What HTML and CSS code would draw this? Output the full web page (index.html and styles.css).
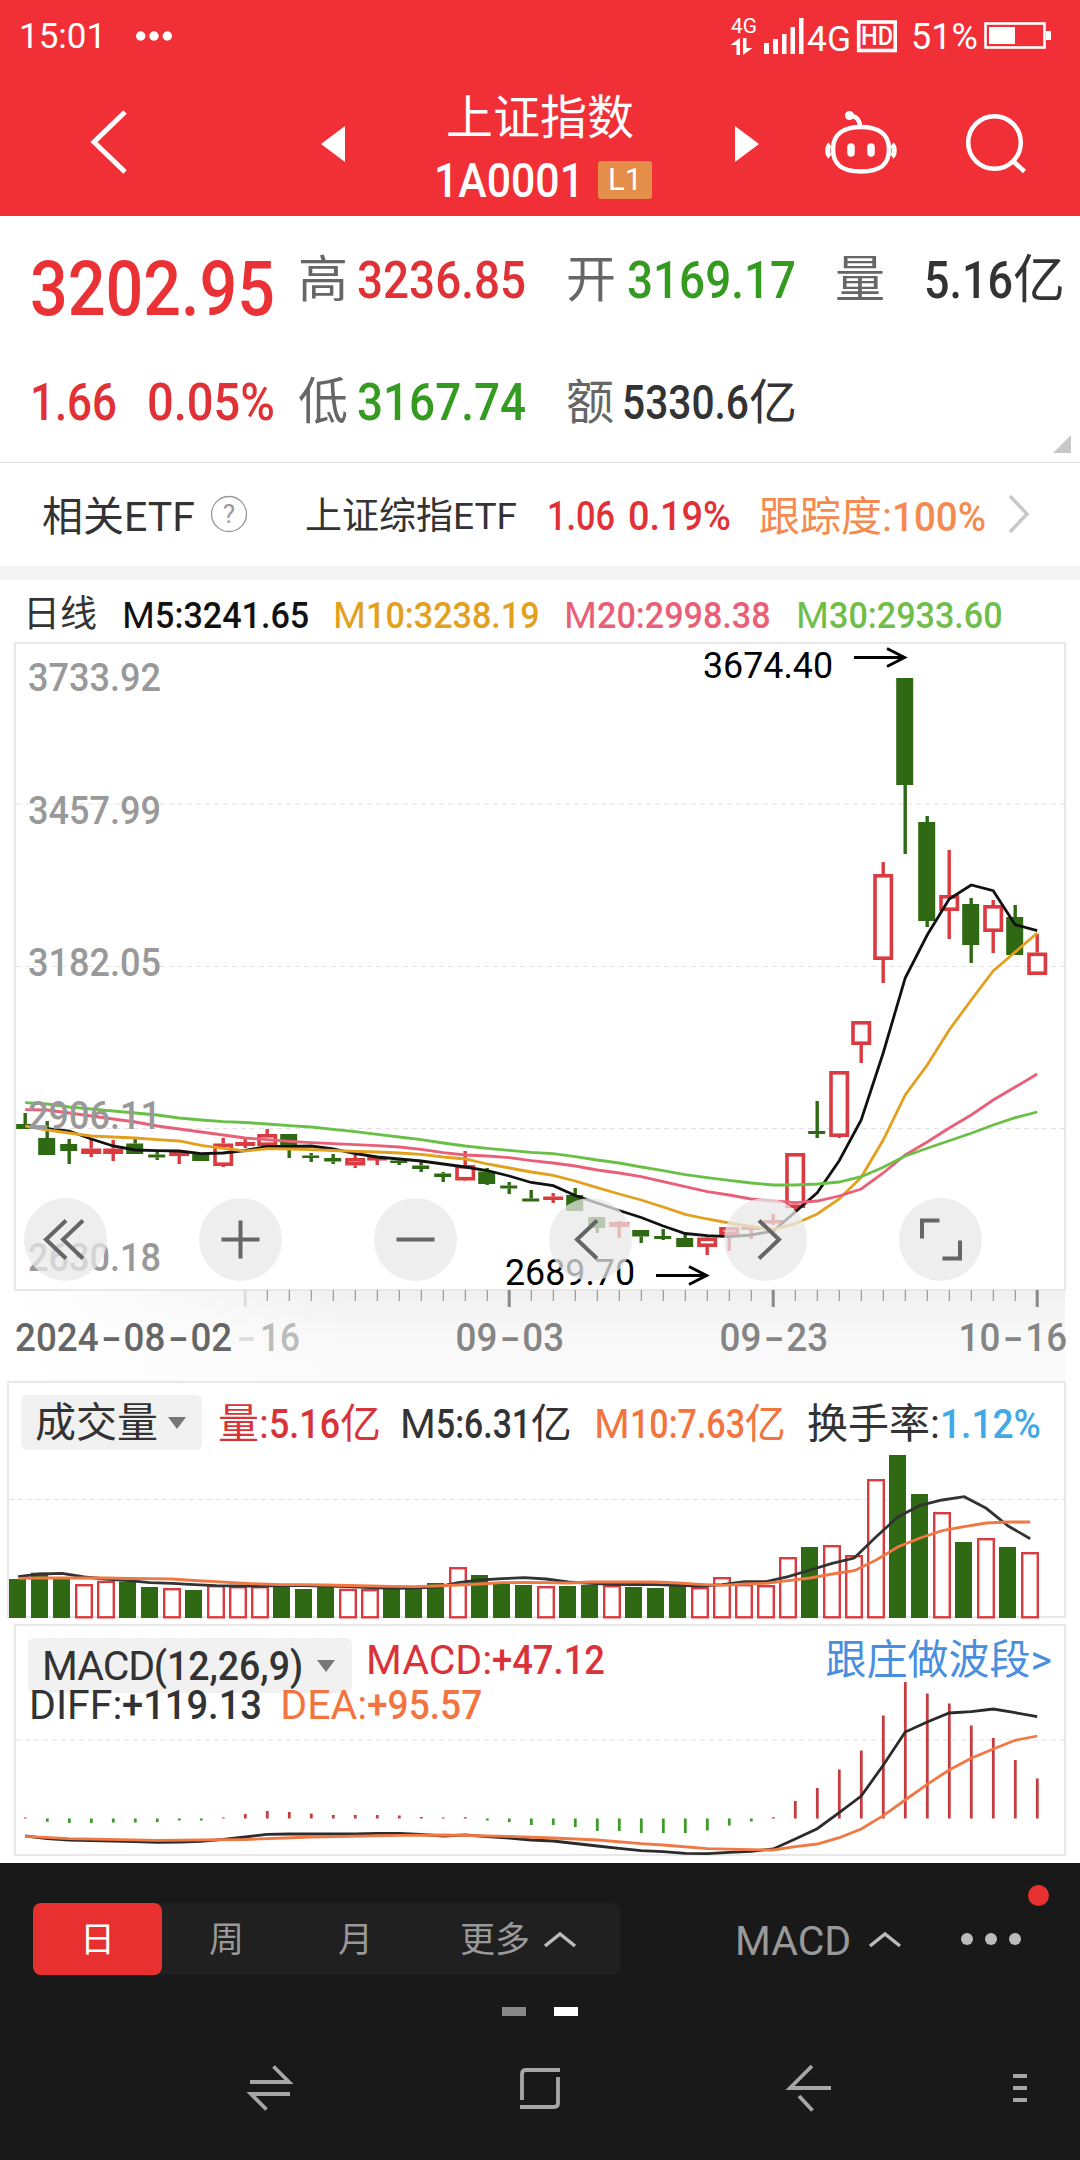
FILE: index.html
```
<!DOCTYPE html>
<html lang="zh-CN">
<head>
  <meta charset="UTF-8" />
  <meta name="viewport" content="width=device-width, initial-scale=1.0"/>
  <title>上证指数 1A0001</title>
  <link rel="stylesheet" href="styles.css">
</head>
<body>

  <header class="header">
    <div class="status">
      <span class="time">15:01</span>
      <svg class="dots" width="36" height="10" viewBox="0 0 36 10" fill="#fff"><circle cx="4.7" cy="5" r="4.7"/><circle cx="18" cy="5" r="4.7"/><circle cx="31.3" cy="5" r="4.7"/></svg>
      <svg class="signal" width="170" height="44" viewBox="730 14 170 44" fill="#fff">
        <text x="733" y="33" font-size="21" textLength="26" lengthAdjust="spacingAndGlyphs">4G</text>
        <path d="M742 38v17h-3.500V45h-6zM745 55V38h3.500v10h6z"/>
        <path d="M766 43h5v11h-5zM775 39h5v15h-5zM784 34h4.500v20h-4.500zM792.500 27h4.500v27h-4.500zM801 18h4.500v36h-4.500z"/>
        <text x="809" y="50.500" font-size="35" textLength="44" lengthAdjust="spacingAndGlyphs">4G</text>
        <rect x="860.700" y="22" width="36.500" height="28.500" fill="none" stroke="#fff" stroke-width="3.600"/>
        <text x="863" y="45" font-size="25" textLength="32" lengthAdjust="spacingAndGlyphs" class="medium">HD</text>
      </svg>
      <span class="percent">51%</span>
      <svg width="68" height="28" viewBox="0 0 68 28"><rect x="1.500" y="1.500" width="59" height="24" fill="none" stroke="#fff" stroke-width="2.600"/><path d="M5 5h26v17H5zM62 9h5v9h-5z" fill="#fff"/></svg>
    </div>
    <div class="nav">
      <svg class="nav-icons" width="1080" height="156" viewBox="0 60 1080 156" fill="none" stroke="#fff" stroke-width="5">
        <path d="M125 112L94 142l31 30"/>
        <path d="M321 144l24-18v36zM759 144l-24-18v36z" fill="#fff" stroke="none"/>
        <g stroke-width="4.500">
          <path d="M861 127c-17 0-28 7-28 22s8 22.500 28 22.500 28-7.500 28-22.500-11-22-28-22z"/>
          <path d="M860 127c0-7-4-11-9-11"/>
          <circle cx="849.500" cy="115.500" r="2.300"/>
          <path d="M830 144.500c-3 2-3 10 0 12M892 144.500c3 2 3 10 0 12" stroke-width="5"/>
          <path d="M851 147v6M871 147v6" stroke-width="7.500" stroke-linecap="round"/>
          <circle cx="994.500" cy="142.500" r="26.300"/>
          <path d="M1013.500 161.500l11 10"/>
        </g>
      </svg>
      <div class="title">
        <div class="name">上证指数</div>
        <div class="code"><b class="din" data-w="150">1A0001</b><span class="badge">L1</span></div>
      </div>
    </div>
  </header>

  <section class="quote">
    <div class="quote-row first">
      <span class="price up"><b class="din" data-w="245">3202.95</b></span>
      <span class="label">高</span><span class="up"><b class="din" data-w="169">3236.85</b></span>
      <span class="label">开</span><span class="down"><b class="din" data-w="169">3169.17</b></span>
      <span class="label">量</span><span class="volume"><b class="din" data-w="89">5.16</b>亿</span>
    </div>
    <div class="quote-row second">
      <span class="change up"><b class="din" data-w="87">1.66</b><b class="din">0.05%</b></span>
      <span class="label">低</span><span class="down"><b class="din" data-w="169">3167.74</b></span>
      <span class="label">额</span><span class="amount"><b class="din" data-w="127">5330.6</b>亿</span>
      <svg class="corner" width="18" height="18" viewBox="0 0 18 18"><path d="M18 0v18H0z" fill="#c8c8c8"/></svg>
    </div>
  </section>

  <section class="etf">
    <span class="etf-title">相关ETF</span>
    <svg class="help" width="38" height="38" viewBox="0 0 38 38"><circle cx="19" cy="19" r="17.500" fill="none" stroke="#999" stroke-width="1.300"/><text x="19" y="28" font-size="26" text-anchor="middle" fill="#999">?</text></svg>
    <span class="etf-name">上证综指ETF</span>
    <span class="up"><b class="din" data-w="68">1.06</b></span>
    <span class="up"><b class="din" data-w="103">0.19%</b></span>
    <span class="track">跟踪度:<b class="din" data-w="94">100%</b></span>
    <svg width="24" height="40" viewBox="0 0 24 40" fill="none" stroke="#c8c8c8" stroke-width="3.500"><path d="M2 2l17 18L2 38"/></svg>
  </section>

  <section class="ma">
    <span class="day">日线</span>
    <span class="m5">M<b class="din">5:3241.65</b></span>
    <span class="m10">M<b class="din">10:3238.19</b></span>
    <span class="m20">M<b class="din">20:2998.38</b></span>
    <span class="m30">M<b class="din">30:2933.60</b></span>
  </section>

  <section class="panel kline">
    <svg id="kline" width="1080" height="738" viewBox="0 642 1080 738"></svg>
    <div class="tools">
      <svg viewBox="-41.500 -41.500 83 83"><path d="M.500-19L-19.500 0l20 19M17.500-19L-2.500 0l20 19"/></svg>
      <svg viewBox="-41.500 -41.500 83 83"><path d="M-19 0h38M0-19v38"/></svg>
      <svg viewBox="-41.500 -41.500 83 83"><path d="M-19 0h38"/></svg>
      <svg viewBox="-41.500 -41.500 83 83"><path d="M6.500-19L-13.500 0l20 19"/></svg>
      <svg viewBox="-41.500 -41.500 83 83"><path d="M-6.500-19L13.500 0l-20 19"/></svg>
      <svg viewBox="-41.500 -41.500 83 83"><path d="M-1-19h-17.500V-1M2 19h17.500V1"/></svg>
    </div>
  </section>

  <section class="panel volume-panel">
    <svg id="volume" width="1080" height="242" viewBox="0 1380 1080 242"></svg>
    <div class="legend">
      <span class="picker">成交量<i class="arrow"></i></span>
      <span class="red">量:<b class="din" data-w="71">5.16</b>亿</span>
      <span>M<b class="din" data-w="95">5:6.31</b>亿</span>
      <span class="orange">M<b class="din" data-w="115">10:7.63</b>亿</span>
      <span>换手率:<b class="din blue">1.12%</b></span>
    </div>
  </section>

  <section class="panel macd-panel">
    <svg id="macd" width="1080" height="241" viewBox="0 1622 1080 241"></svg>
    <div class="macd-legend">
      <div class="macd-top">
        <span class="picker"><span class="macd-name">MACD</span><b class="din" data-w="149">(12,26,9)</b><i class="arrow"></i></span>
        <span class="red">MACD:<b class="din" data-w="113">+47.12</b></span>
        <span class="link">跟庄做波段&gt;</span>
      </div>
      <div class="macd-bottom">
        <span>DIFF:<b class="din" data-w="140">+119.13</b></span>
        <span class="orange">DEA:<b class="din">+95.57</b></span>
      </div>
    </div>
  </section>

  <footer class="footer">
    <div class="bar">
      <div class="tabs">
        <span class="tab active">日</span>
        <span class="tab">周</span>
        <span class="tab">月</span>
        <span class="tab more">更多<svg width="34" height="16" viewBox="0 0 34 16"><path d="M2 14L17 2l15 12"/></svg></span>
      </div>
      <span class="indicator">MACD<svg width="34" height="16" viewBox="0 0 34 16"><path d="M2 14L17 2l15 12"/></svg></span>
      <svg class="menu" width="90" height="72" viewBox="960 1885 90 72"><g fill="#bbb"><circle cx="967" cy="1939" r="6"/><circle cx="991" cy="1939" r="6"/><circle cx="1015" cy="1939" r="6"/></g><circle cx="1038.500" cy="1895.500" r="10.500" fill="#e93030"/></svg>
    </div>
    <div class="pages"><i></i><i class="on"></i></div>
    <svg class="system" width="1080" height="60" viewBox="0 2058 1080 60" fill="none" stroke="#a6a6a6" stroke-width="3.800">
      <path d="M250 2082h39l-15.500-15.500M290 2094h-39l15.500 15.500"/>
      <path d="M522 2100v-26q0-4 4-4h34M558 2077v26q0 4-4 4h-34"/>
      <path d="M812 2066l-22 22h41M799 2096l13.500 14.500"/>
      <path d="M1013 2076h14M1013 2088h14M1013 2100h14"/>
    </svg>
  </footer>

  <script src="script.js"></script>
</body>
</html>
```
FILE: styles.css
```
* {
  box-sizing: border-box;
}
body {
  margin: 0;
  width: 1080px;
  background: #fff;
  color: #333;
  font-family: Roboto, "Noto Sans CJK SC", sans-serif;
  white-space: nowrap;
}
svg {
  display: block;
  flex: none;
}
svg text {
  font-family: Roboto, sans-serif;
}
i {
  font-style: normal;
}
.medium {
  font-weight: 500;
}
/* narrow digits, width is set in script.js */
.din {
  display: inline-block;
  font-weight: 500;
  transform-origin: 0 50%;
}
.up {
  color: #e03236;
}
.down {
  color: #349a20;
}
.red {
  color: #d9333a;
}
.orange {
  color: #f27440;
}
.blue {
  color: #42a9e6;
}

/* header */
.header {
  height: 216px;
  background: #f12f37;
  color: #fff;
}
.status {
  display: flex;
  height: 60px;
  padding: 14px 28px 0 19px;
  align-items: center;
}
.time, .percent {
  font-size: 36px;
  line-height: 46px;
}
.time {
  width: 87px;
  font-size: 35px;
}
.status svg {
  margin-top: -2px;
}
.status .dots {
  margin-left: 30px;
}
.signal {
  margin-left: auto;
}
.percent {
  margin: 0 6px 0 13px;
  width: 67px;
}
.nav {
  display: grid;
}
.nav-icons, .title {
  grid-area: 1 / 1;
}
.title {
  justify-self: center;
  padding-top: 27px;
}
.name {
  font-size: 47px;
  line-height: 62px;
  text-align: center;
}
.code {
  display: flex;
  padding-left: 6px;
  font-size: 48px;
  line-height: 63px;
}
.badge {
  width: 54px;
  height: 38px;
  margin: 12px 0 0 14px;
  background: #e48e49;
  border-radius: 3px;
  font-size: 31px;
  line-height: 38px;
  text-align: center;
}

/* quote */
.quote {
  height: 247px;
  border-bottom: 1px solid #ddd;
}
.quote-row {
  display: grid;
  grid-template-columns: 268px 59px 209px 61px 208px 89px 156px;
  padding-left: 30px;
  font-size: 52px;
  height: 128px;
  line-height: 129px;
}
.quote-row.second {
  height: 118px;
  line-height: 117px;
}
.label {
  font-size: 50px;
  color: #666;
}
.price {
  font-size: 76px;
  line-height: 147px;
}
.price.up {
  color: #ea3135;
}
.change .din + .din {
  margin-left: 30px;
}
.second .amount, .second .label:nth-child(4) {
  font-size: 48px;
}
.amount {
  margin-left: -5px;
}
.corner {
  grid-column: 7;
  margin: 91px 0 0 129px;
}

/* related etf */
.etf {
  display: grid;
  grid-template-columns: 168px 95px 242px 81px 131px 249px 40px;
  height: 117px;
  padding-left: 42px;
  border-bottom: 14px solid #f4f4f4;
  font-size: 40px;
  line-height: 108px;
}
.etf-title {
  font-size: 41px;
}
.help {
  margin-top: 32px;
}
.etf > svg:last-child {
  margin-top: 31px;
}
.etf-name {
  font-size: 37px;
}
.track {
  color: #f58a50;
  font-size: 41px;
}

/* moving averages */
.ma {
  display: grid;
  grid-template-columns: 99px 211px 231px 232px 240px;
  height: 62px;
  padding-left: 23px;
  font-size: 37.7px;
  line-height: 70px;
}
.day {
  font-size: 37px;
}
.m5 {
  color: #111;
}
.m10 {
  color: #e2a01c;
}
.m20 {
  color: #ea5f78;
}
.m30 {
  color: #6fbe4a;
}

/* charts */
.panel {
  display: grid;
}
.panel > * {
  grid-area: 1 / 1;
}
.tools {
  display: flex;
  gap: 92px;
  padding: 556px 0 0 24px;
}
.tools svg {
  width: 83px;
  height: 83px;
  border-radius: 50%;
  background: rgba(232, 232, 232, 0.74);
  fill: none;
  stroke: #666;
  stroke-width: 4;
}
.legend {
  display: grid;
  grid-template-columns: 197px 182px 194px 213px 260px;
  align-items: start;
  padding: 15px 0 0 21px;
  font-size: 41px;
  line-height: 58px;
}
.picker {
  display: flex;
  align-items: center;
  width: 181px;
  height: 55px;
  padding-left: 14px;
  background: #f1f1f1;
  border-radius: 6px;
}
.arrow {
  margin-left: 10px;
  border: 9px solid transparent;
  border-top: 12px solid #777;
  border-bottom: 0;
}
.macd-legend {
  padding: 16px 0 0 28px;
  font-size: 41px;
}
.macd-top {
  display: flex;
  align-items: flex-start;
  height: 52px;
  line-height: 44px;
}
.macd-top .picker {
  width: 324px;
  line-height: 62px;
  margin-right: 14px;
}
.macd-name {
  letter-spacing: -1px;
}
.macd-top .arrow {
  margin-left: 14px;
}
.link {
  margin-left: auto;
  padding-right: 28px;
  color: #4a8ee0;
}
.macd-bottom {
  display: flex;
  gap: 18px;
  padding-left: 1px;
  line-height: 30px;
}

/* footer */
.footer {
  height: 297px;
  background: #191919;
  color: #999;
}
.bar {
  display: flex;
  padding: 22px 0 0 33px;
}
.tabs {
  display: flex;
  height: 72px;
  width: 587px;
  margin-top: 18px;
  background: #202020;
  border-radius: 8px;
}
.tab {
  width: 129px;
  font-size: 35px;
  line-height: 76px;
  text-align: center;
}
.tab.active {
  background: #e93030;
  border-radius: 8px;
  color: #fff;
}
.more {
  display: flex;
  width: 200px;
  padding-left: 40px;
}
.footer .more svg, .indicator svg {
  margin: 29px 0 0 13px;
  fill: none;
  stroke: #bbb;
  stroke-width: 3.5;
}
.indicator {
  display: flex;
  width: 226px;
  margin: 18px 0 0 115px;
  font-size: 41px;
  line-height: 76px;
}
.footer .indicator svg {
  margin-left: 17px;
}
.menu {
  margin-left: -1px;
}
.pages {
  display: flex;
  gap: 28px;
  justify-content: center;
  margin-top: 28px;
}
.pages i {
  width: 24px;
  height: 9px;
  background: #888;
}
.pages .on {
  background: #fff;
}
.system {
  margin-top: 42px;
}
```
FILE: script.js
```
// squeeze the digits to the width of the number font
document.querySelectorAll('.din').forEach(function (el) {
  const natural = el.getBoundingClientRect().width;
  const width = Number(el.dataset.w) || natural * 0.905;
  el.style.width = width + 'px';
  el.style.transform = 'scaleX(' + width / natural + ')';
});

const RED = '#d93b40';
const GREEN = '#2f6913';
const STEP = 22;

const rect = (x, y, w, h, fill) => `<rect x="${x}" y="${y}" width="${w}" height="${h}" fill="${fill}"/>`;
const hollow = (x, y, w, h, sw, fill) => `<rect x="${x + sw / 2}" y="${y + sw / 2}" width="${w - sw}" height="${Math.max(h - sw, 0.5)}" fill="${fill}" stroke="${RED}" stroke-width="${sw}"/>`;
const dash = (y, x1, x2) => `<path d="M${x1} ${y}H${x2}" stroke="#e2e2e2" stroke-width="1.2" stroke-dasharray="5 4"/>`;
const label = (x, y, w, size, fill, text, weight) => `<text x="${x}" y="${y}" font-size="${size}" textLength="${w}" lengthAdjust="spacingAndGlyphs" fill="${fill}" font-weight="${weight || 500}">${text}</text>`;
const box = (x, y, w, h) => `<rect x="${x}" y="${y}" width="${w}" height="${h}" fill="none" stroke="#e8e8e8" stroke-width="2"/>`;

// dates have narrow digits and a wide dash between them
function dateLabel(x, y, fill, text) {
  let parts = '';
  text.split(/(-)/).forEach(part => {
    const w = part === '-' ? 25 : part.length * 20.9;
    parts += part === '-'
      ? `<tspan x="${x + 3}" textLength="20" lengthAdjust="spacingAndGlyphs">-</tspan>`
      : `<tspan x="${x}" textLength="${w}" lengthAdjust="spacingAndGlyphs">${part}</tspan>`;
    x += w;
  });
  return `<text y="${y}" font-size="39" fill="${fill}" font-weight="500">${parts}</text>`;
}

// ys is one value per day, null where the line runs straight through
function line(ys, x0, color, sw) {
  const pts = ys.map((y, i) => y === null ? '' : `${(x0 + i * STEP).toFixed(1)},${y}`).filter(Boolean);
  return `<polyline points="${pts.join(' ')}" fill="none" stroke="${color}" stroke-width="${sw}"/>`;
}

// [up, high, body top, body bottom, low]
const candles = [
  [0,1113,1124,1129,1129],[0,1121,1138,1155,1155],[0,1139,1144,1151,1164],[1,1140,1148.5,1154,1157],[1,1140,1148.5,1154,1161],
  [0,1139,1143.5,1154,1154],[0,1152,1154.5,1157.5,1160],[1,1151,1152,1156,1164],[0,1153,1153.5,1161,1161],[1,1138,1143.5,1166,1167],
  [1,1139,1142,1145.5,1148],[1,1129,1134,1146,1146],[0,1134,1134,1146,1158],[0,1153,1155.5,1158,1162],[0,1154,1158,1161.5,1164],
  [1,1155,1158,1165.5,1168],[1,1156,1157,1160,1165],[0,1158,1160.5,1163,1165],[0,1162,1165.5,1169,1172],[0,1172,1173.5,1177,1182],
  [1,1151,1165,1180.5,1181],[0,1168,1171.5,1184,1185],[0,1182,1185.5,1188.5,1194],[0,1190,1198.5,1201.5,1201.5],[1,1193,1196.5,1199.5,1203],
  [0,1188,1195,1211,1211],[0,1217,1217,1228,1233],[1,1221,1222,1227,1238],[0,1230,1230,1236.5,1243],[0,1229,1236,1239,1240],
  [0,1234,1238,1247,1247],[1,1236,1237.5,1247,1255],[1,1227,1227,1235,1251],[1,1225,1227,1229.5,1239],[1,1214,1220,1223,1225],
  [1,1153,1153,1208,1211],[0,1101,1131,1134,1138],[1,1071,1071,1137,1138],[1,1021,1021,1045,1063],[1,862,874,960,983],
  [0,678,678,785,854],[0,816,822,921,927],[1,850,895,911,939],[0,898,904,945,963],[1,900,905,932,953],[0,905,917,955,955],[1,934,952.5,975,975]
];
const ma5 = [1126,1128.7,1131,1139,1146,1150,1150.7,1151,1153.7,1153,1150.5,1146.5,1146.5,1146,1149,1153.5,1157,1159,1161,1164,1167,1170.5,1176,1182.5,1185.7,1195.5,1203,1210.5,1217.5,1226,1233.5,1235.7,1236.7,1235,1231,1212,1192.7,1160.7,1120,1053,978,935,899,885,890.7,924.7,930.7];
const ma10 = [1126,1130,1133,1136,1137,1138,1139.7,1141,1145.3,1148.3,1151,1148.7,1149,1149.7,1150.5,1151.3,1152,1153,1154.3,1157,1159,1164,1168,1172,1175.3,1181,1187.7,1194,1200,1207,1214.3,1219,1223,1226.7,1229.3,1223.7,1214,1199,1177.3,1140,1095,1065,1030,1000,971,952,933];
const ma20 = [1109.7,1110,1113,1116,1119,1122,1126,1129,1132,1135,1138,1139.7,1141.3,1142.7,1143.7,1144.7,1145.7,1147,1149.3,1152.7,1155,1156,1157.7,1160.7,1163,1166,1170,1173,1176.7,1181.7,1186.7,1191.7,1195,1199,1201,1202.7,1201,1196,1189,1173,1155,1142,1128,1115,1100,1087,1074];
const ma30 = [1102.7,1104,1107,1109,1111,1113,1115,1118,1120,1121.7,1122.5,1124,1125.7,1127,1129.3,1131.7,1134.3,1137,1139.7,1143,1146,1148.3,1150.3,1152.3,1153.7,1156.7,1160,1163,1167,1170.7,1174.7,1177.7,1180.3,1183,1185,1185,1184,1182,1176.7,1167.3,1156,1148.3,1140.7,1133.3,1125,1117.7,1112];

function drawKline() {
  let s = '<defs><linearGradient id="axis" x2="0" y2="1"><stop offset="0" stop-color="#f0f0f0"/><stop offset=".5" stop-color="#f8f8f8"/><stop offset="1" stop-color="#fafafa"/></linearGradient>' +
    '<linearGradient id="fade"><stop offset="0" stop-color="#fff"/><stop offset="1" stop-color="#fff" stop-opacity="0"/></linearGradient></defs>';
  s += rect(15, 1290, 1050, 90, 'url(#axis)') + rect(15, 1291, 340, 89, 'url(#fade)');
  s += box(15, 643, 1050, 647);
  [804, 966.5, 1128.7].forEach(y => { s += dash(y, 16, 1065); });

  candles.forEach(([up, high, top, bottom, low], i) => {
    const x = 25.2 + i * STEP;
    const color = up ? RED : GREEN;
    s += rect(x - 1.7, high, 3.4, top - high, color) + rect(x - 1.7, bottom, 3.4, low - bottom, color);
    if (up) s += hollow(x - 10, top, 20, bottom - top, Math.min(3.6, bottom - top), '#fff');
    else s += rect(x - 9, top, 17, bottom - top, color);
  });
  s += line(ma5, 25.2, '#111', 2.8) + line(ma10, 25.2, '#e2a01c', 2.8) + line(ma20, 25.2, '#ea5f78', 2.8) + line(ma30, 25.2, '#6abf47', 2.8);

  s += label(28, 691, 133, 39, '#999', '3733.92') + label(28, 824, 133, 39, '#999', '3457.99') + label(28, 976, 133, 39, '#999', '3182.05');
  s += label(28, 1128.7, 133, 39, '#999', '2906.11') + label(28, 1271, 133, 39, '#999', '2630.18');
  s += label(703, 678, 130, 36, '#000', '3674.40', 400) + label(505, 1285, 130, 36, '#000', '2689.70', 400);
  s += '<path d="M854 657.500h50M887 648.500l17.500 9-17.500 9M656 1275.500h50M689 1266.500l17.500 9-17.500 9" fill="none" stroke="#000" stroke-width="3"/>';

  for (let i = 10; i < 47; i++) {
    const x = 25.2 + i * STEP;
    if (i % 12 === 10) s += rect(x - 1.5, 1290, 3, 17, i === 10 ? '#ddd' : '#888');
    else s += rect(x - 0.5, 1290, 1.2, 11, '#999');
  }
  s += dateLabel(15, 1350.7, '#666', '2024-08-02') + label(237, 1350.7, 19, 39, '#ddd', '-') + label(260, 1350.7, 40, 39, '#bbb', '16');
  s += dateLabel(455.5, 1350.7, '#858585', '09-03') + dateLabel(719.5, 1350.7, '#858585', '09-23') + dateLabel(958.500, 1350.7, '#858585', '10-16');
  document.getElementById('kline').innerHTML = s;
}

// [up, top of the bar]
const volumes = [
  [0,1579],[0,1572.7],[0,1579],[1,1584],[1,1580.7],[0,1581.7],[0,1587],[1,1588],[0,1590],[1,1585],[1,1586],[1,1586],
  [0,1586],[0,1589],[0,1586.7],[1,1588.7],[1,1589],[0,1588],[0,1588],[0,1583],[1,1567],[0,1575],[0,1584],[0,1585],
  [1,1586],[0,1586],[0,1585],[1,1585],[0,1587],[0,1588],[0,1585.7],[1,1587],[1,1577],[1,1584],[1,1585],[1,1557],
  [0,1547],[1,1545],[1,1555],[1,1479],[0,1455],[0,1494],[1,1512],[0,1542],[1,1538],[0,1547],[1,1552]
];
const vol5 = [1576.7,1574,1573.3,1577,1579,1580.7,1582.7,1583.3,1584.7,1585.7,1586,1586,1585.7,1585.7,1586,1586.7,1587.7,1588.3,1588,1587,1582.7,1580,1578.7,1577.7,1579,1582,1583.3,1584.3,1584.5,1584.7,1585.3,1586,1584.7,1581.7,1581.7,1576.7,1570,1563.3,1558,1536.7,1516.7,1505.3,1500,1496.7,1508.3,1526,1538.7];
const vol10 = [1578.3,1578,1578,1578,1578,1578.5,1578.7,1579,1580.5,1581.7,1583,1584,1584.7,1584.7,1585,1585.5,1586,1586.3,1586.7,1586,1585,1584,1582.7,1582.5,1582.7,1583,1582,1582,1582,1582,1583,1584.3,1585.3,1584,1583.3,1580.7,1578,1574,1570.7,1560,1546.7,1538,1530.7,1526.7,1523,1522,1522];

function drawVolume() {
  let s = rect(15, 1380, 1050, 2, '#fafafa') + box(8, 1382, 1057, 235) + dash(1499.5, 9, 1065);
  volumes.forEach(([up, top], i) => {
    const x = 9 + i * STEP;
    s += up ? hollow(x, top, 18, 1618.5 - top, 2.4, '#fff') : rect(x, top, 17, 1618 - top, GREEN);
  });
  s += line(vol5, 18.2, '#333', 2.8) + line(vol10, 18.2, '#f07843', 2.8);
  document.getElementById('volume').innerHTML = s;
}

const bars = [1,-3.3,-4.5,-4.5,-4,-4,-3.5,-2,-2,1,4.5,7.5,6.5,5,3.5,3.5,3.5,3,1.5,1,1.3,-2,-3.5,-6.5,-6.5,-8.5,-12.5,-12.5,-14.5,-14.5,-14.5,-12,-7,-3,1.3,17.5,30.5,49,68,103,136.5,125,115,93,80.5,58.5,40];
const diff = [1836,1838.7,1840,1840.7,1841,1841.5,1842.3,1842,1841.3,1839.3,1837,1834.3,1834,1834,1834,1834,1833.3,1833.3,1834.5,1836,1835,1836.7,1838,1840,1841,1843.5,1846,1848.3,1850.7,1851.7,1853.3,1853.7,1852.3,1851.3,1849,1839,1828.7,1812.7,1796,1765.3,1732,1722,1713,1711.7,1709,1712.7,1716.7];
const dea = [1836.3,null,1838.7,null,null,null,1840.3,null,null,null,1839.5,null,null,1837,null,null,null,1835.3,null,1835,null,null,1836.3,null,1838,null,1840,null,1843.7,1845,null,1848.7,null,1849.7,1850,1846.7,1844,1837.7,1829,1815.7,1800,1784.3,1770,1758.3,1749,1740.3,1736];

function drawMacd() {
  let s = box(15, 1625, 1050, 230) + dash(1740, 16, 1065);
  bars.forEach((v, i) => {
    s += rect(23.9 + i * STEP, v > 0 ? 1818.5 - v : 1818.5, 2.8, Math.abs(v), v > 0 ? '#c53c40' : '#3f9a2c');
  });
  s += line(diff, 25.2, '#2b2b2b', 2.8) + line(dea, 25.2, '#f07843', 2.8);
  document.getElementById('macd').innerHTML = s;
}

drawKline();
drawVolume();
drawMacd();
```
